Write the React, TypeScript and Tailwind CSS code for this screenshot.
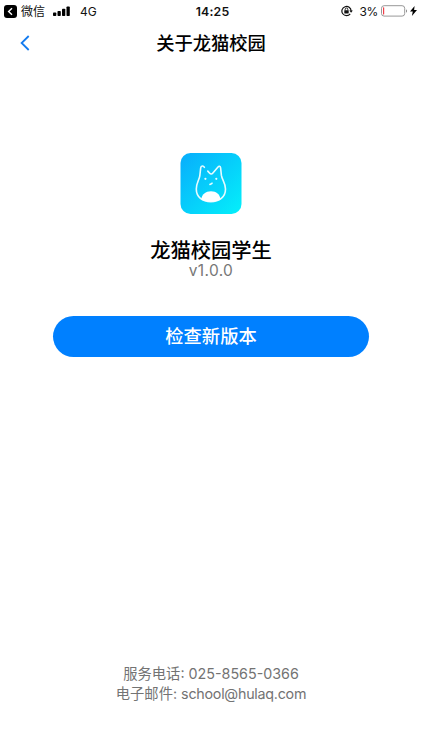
import type { ReactNode } from "react";

function StatusBar() {
  return (
    <div className="grid h-[22px] grid-cols-3 items-center text-[12px] leading-[22px] text-[#111]">
      <div className="flex items-center pl-1">
        <svg className="h-[13px] w-[13px]" viewBox="0 0 13 13">
          <rect width="13" height="13" rx="3" fill="#000" />
          <path d="M8 3.2 4.6 6.5 8 9.8" fill="none" stroke="#fff" strokeWidth="1.4" />
        </svg>
        <span className="ml-1 w-8 pt-px leading-[21px]">微信</span>
        <svg className="h-[11px] w-[17px]" viewBox="0 0 17 11">
          <rect x="0" y="6.5" width="3.3" height="3.5" rx="0.8" />
          <rect x="4.5" y="5" width="3.3" height="5" rx="0.8" />
          <rect x="9" y="2.8" width="3.3" height="7.2" rx="0.8" />
          <rect x="13.5" y="0.4" width="3.3" height="9.6" rx="0.8" />
        </svg>
        <span className="ml-[10px] pt-px leading-[21px]">4G</span>
      </div>
      <div className="pl-[3px] pt-px text-center text-[12.3px] font-semibold leading-[21px] tracking-[0.2px]">14:25</div>
      <div className="flex items-center justify-end pr-[5px]">
        <svg className="h-3 w-3" viewBox="0 0 12 12" fill="none" stroke="#111">
          <path d="M9.2 8.8A4.6 4.6 0 1 1 10.1 6" strokeWidth="1.2" />
          <path d="M8.3 5.6h3.5L10.1 7.8z" fill="#111" stroke="none" />
          <rect x="3.3" y="5.2" width="4.4" height="3.2" rx="0.4" fill="#111" stroke="none" />
          <path d="M4.2 5.4V4.3a1.3 1.3 0 0 1 2.6 0v1.1" strokeWidth="0.9" />
        </svg>
        <span className="ml-[7px] mr-[3px] pt-px leading-[21px] tracking-[-0.4px]">3%</span>
        <svg className="h-3 w-[27px]" viewBox="0 0 27 12">
          <rect x="0.5" y="0.7" width="23.2" height="10.4" rx="2.6" fill="none" stroke="#8c8c8c" strokeWidth="0.9" />
          <rect x="2" y="2.3" width="1.2" height="7.2" rx="0.5" fill="#f0414b" />
          <path d="M25 4.2c1.4.5 1.4 3 0 3.5z" fill="#8c8c8c" />
        </svg>
        <svg className="ml-[2px] h-[10px] w-[7px]" viewBox="0 0 7 10">
          <path d="M4.6 0 0 5.6h2.8L1.9 10 7 4.1H4.1z" />
        </svg>
      </div>
    </div>
  );
}

function AppIcon() {
  return (
    <svg className="h-[62px] w-[62px]" viewBox="0 0 62 62">
      <defs>
        <linearGradient id="sky" x1="0" y1="0" x2="1" y2="1">
          <stop offset="0" stopColor="#08adfc" />
          <stop offset="1" stopColor="#04f0fa" />
        </linearGradient>
      </defs>
      <rect x="0.5" y="1" width="61" height="61" rx="10" fill="url(#sky)" />
      <path
        d="M24.4 15.4C23.4 13.5 21 13.6 20.7 15.8L19.8 23.8C19.3 27.6 16.3 30.8 16.3 37C16.3 45.2 22.5 49.7 30.8 49.7C39.2 49.7 45.5 45.2 45.5 37C45.5 30.8 42 27.6 41.4 23.4L40.6 15.9C40.4 13.9 39 13.8 37.8 15.2L32.9 21C31.8 22.3 30.6 22.2 29.7 21.2L27.8 19.1"
        fill="none"
        stroke="#e6fbff"
        strokeWidth="1.6"
        strokeLinecap="round"
        strokeLinejoin="round"
      />
      <path d="M21.3 47.4C21.8 42.2 25.7 39.2 31 39.2S40 42.2 40.4 47.4C35.5 50.6 26.2 50.6 21.3 47.4z" fill="#fff" />
      <circle cx="25.4" cy="26.8" r="1.1" fill="#e6fbff" />
      <circle cx="36.3" cy="26.8" r="1.1" fill="#e6fbff" />
      <path d="M29.9 32.5c.6-.8 1.8-.4 2.2-1.4" fill="none" stroke="#e6fbff" strokeWidth="1.5" strokeLinecap="round" />
    </svg>
  );
}

function ContactLine({ children }: { children: ReactNode }) {
  return <p className="whitespace-nowrap text-[14.3px] leading-[20px]">{children}</p>;
}

export default function App() {
  return (
    <div className="flex h-[750px] w-full flex-col bg-white font-['Inter','Noto_Sans_CJK_SC',sans-serif] text-black">
      <StatusBar />
      <header className="grid h-[42px] grid-cols-[60px_1fr_60px] items-center">
        <button className="pl-5" aria-label="返回">
          <svg className="h-4 w-[10px]" viewBox="0 0 10 16" fill="none" stroke="#137bef" strokeWidth="1.8">
            <path d="M8.7 1 1.6 8l7.1 7" />
          </svg>
        </button>
        <h1 className="text-center text-[18.3px] font-medium leading-[42px]">关于龙猫校园</h1>
      </header>
      <main className="flex flex-1 flex-col items-center pt-[88px]">
        <AppIcon />
        <h2 className="mt-[26px] text-[20.3px] font-medium leading-[22px]">龙猫校园学生</h2>
        <p className="text-[15.5px] leading-[18px] tracking-[0.35px] text-[#777]">v1.0.0</p>
        <button className="mt-[36px] h-[41px] w-[316px] rounded-full bg-[#0080ff] text-[18.3px] font-medium leading-[41px] text-white">
          检查新版本
        </button>
      </main>
      <footer className="pb-[46px] text-center text-[#737373]">
        <ContactLine>服务电话: 025-8565-0366</ContactLine>
        <ContactLine>
          电子邮件: <span className="tracking-[-0.25px]">school@hulaq.com</span>
        </ContactLine>
      </footer>
    </div>
  );
}
